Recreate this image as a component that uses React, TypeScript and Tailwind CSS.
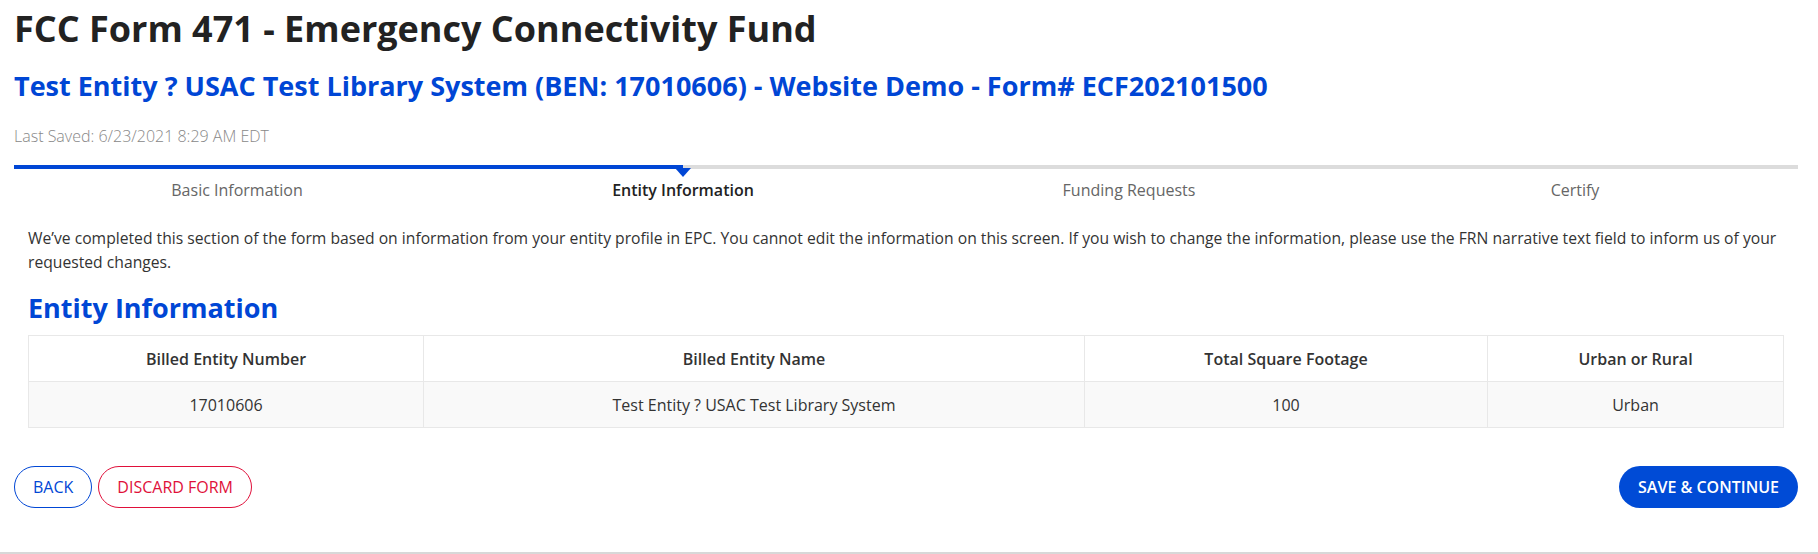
import React from 'react'

const steps = ['Basic Information', 'Entity Information', 'Funding Requests', 'Certify']

const columns = [
  { label: 'Billed Entity Number', value: '17010606', width: 'w-[395px]' },
  { label: 'Billed Entity Name', value: 'Test Entity ? USAC Test Library System', width: 'w-[661px]' },
  { label: 'Total Square Footage', value: '100', width: 'w-[403px]' },
  { label: 'Urban or Rural', value: 'Urban', width: 'w-[297px]' },
]

export default function App() {
  const active = 1

  return (
    <div className="w-[1818px] h-[554px] bg-white font-['Open_Sans',sans-serif] text-[#222] flex flex-col">
      <div className="flex-1 pl-[14px] pr-[20px]">
        <h1 className="pt-[7px] text-[36px] leading-[44px] font-bold text-[#222]">
          FCC Form 471 - Emergency Connectivity Fund
        </h1>
        <h2 className="mt-[17px] text-[27px] leading-[36px] font-bold text-[#0046d5]">
          Test Entity ? USAC Test Library System (BEN: 17010606) - Website Demo - Form# ECF202101500
        </h2>
        <p className="mt-[22px] text-[16px] leading-[20px] font-light text-[#888]">
          Last Saved: 6/23/2021 8:29 AM EDT
        </p>

        {/* progress steps */}
        <div className="mt-[19px]">
          <div className="relative h-[4px] bg-[#dcdcdc]">
            <div className="h-full w-[669px] bg-[#0046d5]" />
            <div className="absolute left-[661px] top-[3px] w-0 h-0 border-l-[8px] border-r-[8px] border-t-[9px] border-l-transparent border-r-transparent border-t-[#0046d5]" />
          </div>
          <div className="grid grid-cols-4 pt-[9px]">
            {steps.map((s, i) => (
              <div
                key={s}
                className={`text-center text-[16px] leading-[24px] ${
                  i === active ? 'font-semibold text-[#222]' : 'font-normal text-[#666]'
                }`}
              >
                {s}
              </div>
            ))}
          </div>
        </div>

        <div className="px-[14px]">
          <p className="mt-[24px] text-[15.7px] leading-[24px] text-[#333]">
            We’ve completed this section of the form based on information from your entity profile in EPC. You cannot
            edit the information on this screen. If you wish to change the information, please use the FRN narrative text
            field to inform us of your requested changes.
          </p>
          <h3 className="mt-[16px] text-[27px] leading-[36px] font-bold text-[#0046d5]">Entity Information</h3>

          <div className="mt-[9px] border border-[#e8e8e8] text-[16px] text-[#333]">
            <div className="flex bg-white border-b border-[#e8e8e8] h-[46px]">
              {columns.map((c, i) => (
                <div
                  key={c.label}
                  className={`${c.width} flex items-center justify-center font-semibold ${
                    i < columns.length - 1 ? 'border-r border-[#e8e8e8]' : 'flex-1'
                  }`}
                >
                  {c.label}
                </div>
              ))}
            </div>
            <div className="flex bg-[#f9f9f9] h-[45px]">
              {columns.map((c, i) => (
                <div
                  key={c.label}
                  className={`${c.width} flex items-center justify-center ${
                    i < columns.length - 1 ? 'border-r border-[#e8e8e8]' : 'flex-1'
                  }`}
                >
                  {c.value}
                </div>
              ))}
            </div>
          </div>
        </div>

        <div className="mt-[38px] flex items-center justify-between">
          <div className="flex gap-[6px]">
            <button className="h-[42px] px-[18px] rounded-full border border-[#0046d5] text-[#0046d5] text-[16px] bg-white">
              BACK
            </button>
            <button className="h-[42px] px-[18px] rounded-full border border-[#e0103a] text-[#e0103a] text-[16px] bg-white">
              DISCARD FORM
            </button>
          </div>
          <button className="h-[42px] px-[19px] rounded-full bg-[#004bd6] text-white text-[16px] font-semibold">
            SAVE &amp; CONTINUE
          </button>
        </div>
      </div>
      <div className="h-[2px] bg-[#d8d8d8]" />
    </div>
  )
}
